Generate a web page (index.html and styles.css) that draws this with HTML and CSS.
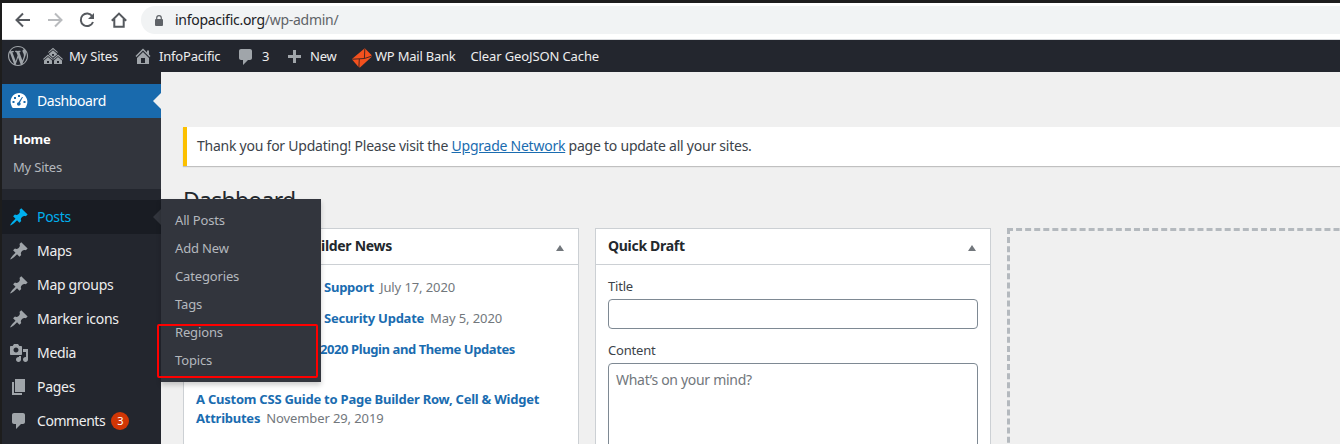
FILE: index.html
```html
<!DOCTYPE html>
<html lang="en">
<head>
<meta charset="utf-8">
<title>Dashboard</title>
<link rel="stylesheet" href="styles.css">
</head>
<body>
<svg width="0" height="0" class="defs">
  <symbol id="pin" viewBox="0 0 20 20"><path d="M10.44 3.02l1.82-1.82 6.36 6.35-1.83 1.82c-1.05-.68-2.48-.57-3.41.36l-.75.75c-.92.93-1.04 2.35-.35 3.41l-1.83 1.82-2.41-2.41-2.8 2.79c-.42.42-3.38 2.71-3.8 2.29s1.86-3.39 2.28-3.81l2.79-2.79L4.1 9.36l1.83-1.82c1.05.69 2.48.57 3.4-.36l.75-.75c.93-.92 1.05-2.35.36-3.41z"/></symbol>
  <symbol id="comment" viewBox="0 0 20 20"><path d="M5 2h9c1.1 0 2 .9 2 2v7c0 1.1-.9 2-2 2h-2l-5 5v-5H5c-1.1 0-2-.9-2-2V4c0-1.1.9-2 2-2z"/></symbol>
</svg>
<header class="browser">
  <svg class="nav" viewBox="0 0 16 16"><path d="M15 8H2M8 1.5L1.5 8L8 14.5"/></svg>
  <svg class="nav off" viewBox="0 0 16 16"><path d="M1 8h13M8 1.5L14.500 8L8 14.500"/></svg>
  <svg class="nav" viewBox="0 0 16 16"><path d="M13.300 4.200A6.300 6.300 0 1 0 14 10"/><path class="solid" d="M15 1v6H9z"/></svg>
  <svg class="nav" viewBox="0 0 16 16"><path d="M.8 8.800L8 1.600l7.200 7.200M3.300 7v7.800h9.400V7"/></svg>
  <div class="url">
    <svg class="lock" viewBox="0 0 8 11"><rect y="4" width="8" height="7" rx="1"/><path d="M1.700 5V3a2.300 2.300 0 0 1 4.600 0v2" fill="none" stroke="#5f6368" stroke-width="1.200"/></svg>
    <span class="host">infopacific.org</span><span class="path">/wp-admin/</span>
  </div>
</header>
<nav class="adminbar">
  <svg class="ico wp" viewBox="0 0 20 20"><path d="M20 10c0-5.510-4.490-10-10-10C4.480 0 0 4.490 0 10c0 5.520 4.480 10 10 10 5.510 0 10-4.480 10-10zM7.780 15.370L4.370 6.220c.55-.02 1.170-.08 1.170-.08.5-.06.44-1.130-.06-1.110 0 0-1.450.11-2.370.11-.18 0-.37 0-.58-.01C4.120 2.690 6.870 1.110 10 1.110c2.330 0 4.450.87 6.050 2.340-.68-.11-1.650.39-1.650 1.580 0 .74.45 1.360.9 2.100.35.61.55 1.360.55 2.460 0 1.490-1.400 5-1.400 5l-3.030-8.370c.54-.02.82-.17.82-.17.5-.05.44-1.250-.06-1.220 0 0-1.440.12-2.380.12-.87 0-2.330-.12-2.330-.12-.5-.03-.56 1.200-.06 1.220l.92.08 1.260 3.410zM17.410 10c.24-.64.74-1.870.43-4.250.7 1.290 1.050 2.710 1.050 4.250 0 3.290-1.730 6.240-4.400 7.780.97-2.590 1.940-5.200 2.920-7.780zM6.100 18.090C3.120 16.650 1.110 13.530 1.110 10c0-1.300.23-2.480.72-3.590C3.250 10.300 4.670 14.200 6.100 18.090zm4.030-6.630l2.580 6.980c-.86.29-1.760.45-2.710.45-.79 0-1.570-.11-2.290-.33.81-2.380 1.620-4.740 2.420-7.100z"/></svg>
  <a class="ab sites"><svg class="ico" viewBox="0 0 20 20"><path d="M14.270 6.870L10 3.140 5.730 6.870 5 6.140l5-4.380 5 4.380zM14 8.420l-4.050 3.430L6 8.380v-.74l4-3.500 4 3.500v.78zM11 9.700V8H9v1.700h2zm-1.730 4.030L5 10 .73 13.730 0 13l5-4.380L10 13zm10 0L15 10l-4.270 3.730L10 13l5-4.380L20 13zM5 11l4 3.500V18H1v-3.500zm10 0l4 3.500V18h-8v-3.500zm-9 6v-2H4v2h2zm10 0v-2h-2v2h2z"/></svg><span>My Sites</span></a>
  <a class="ab site"><svg class="ico" viewBox="0 0 20 20"><path d="M16 8.500l1.530 1.530-1.060 1.060L10 4.600l-6.470 6.490-1.060-1.060L10 2.500l4 4v-2h2v4zm-6-2.460l6 5.990V18H4v-5.970zM12 17v-5H8v5h4z"/></svg><span>InfoPacific</span></a>
  <a class="ab count"><svg class="ico"><use href="#comment"/></svg><span>3</span></a>
  <a class="ab new"><svg class="ico" viewBox="0 0 20 20"><path d="M17 7v3h-5v5H9v-5H4V7h5V2h3v5h5z"/></svg><span>New</span></a>
  <a class="ab mail"><svg class="ico" viewBox="0 0 20 20"><path fill="#f4511e" d="M13 .5L19.500 7v2L8 19.500 6.500 19 .5 12v-1.500L12.500.5z"/><path fill="none" stroke="#3a2220" stroke-width=".9" d="M12.800.8l-.4 9.700L19.500 8.200M.8 11.200l11.600-.7M7.300 11l-.4 8"/></svg><span>WP Mail Bank</span></a>
  <a class="ab cache"><span>Clear GeoJSON Cache</span></a>
</nav>
<div class="shell">
  <aside class="side">
    <a class="item current"><svg class="mi" viewBox="0 0 20 20"><path fill-rule="evenodd" d="M3.760 17h12.480c1.340-1.710 2.150-3.880 2.150-6.250C18.390 6 14.640 2 10 2S1.610 6 1.610 10.750c0 2.370.81 4.540 2.150 6.250zM9 4h2v2H9zM5 6h2v2H5zM13 6h1l-3 5.500c.8.700 1 2 0 2.800-1.200.9-3 .3-3-1.300 0-1 .7-1.700 1.500-1.800zM3.500 10h2v2h-2zM14.500 10h2v2h-2z"/></svg><span>Dashboard</span></a>
    <div class="sub"><b>Home</b><span>My Sites</span></div>
    <a class="item posts"><svg class="mi"><use href="#pin"/></svg><span>Posts</span></a>
    <a class="item"><svg class="mi"><use href="#pin"/></svg><span>Maps</span></a>
    <a class="item"><svg class="mi"><use href="#pin"/></svg><span>Map groups</span></a>
    <a class="item"><svg class="mi"><use href="#pin"/></svg><span>Marker icons</span></a>
    <a class="item"><svg class="mi" viewBox="0 0 20 20"><path d="M13 11V4c0-.55-.45-1-1-1h-1.670L9 1H5L3.670 3H2c-.55 0-1 .45-1 1v7c0 .55.45 1 1 1h10c.55 0 1-.45 1-1zM7 4.500c1.380 0 2.500 1.120 2.500 2.500S8.380 9.500 7 9.500 4.500 8.380 4.500 7 5.620 4.500 7 4.500zM14 6h5v10.500c0 1.380-1.120 2.500-2.500 2.500S14 17.880 14 16.500s1.120-2.500 2.500-2.500c.17 0 .34.02.5.05V9h-3V6zm-4 8.050V13h2v3.500c0 1.380-1.120 2.500-2.500 2.500S7 17.880 7 16.500 8.120 14 9.500 14c.17 0 .34.02.5.05z"/></svg><span>Media</span></a>
    <a class="item"><svg class="mi" viewBox="0 0 20 20"><path d="M6 15V2h10v13H6zm-1 1h8v2H3V5h2v11z"/></svg><span>Pages</span></a>
    <a class="item comments"><svg class="mi"><use href="#comment"/></svg><span>Comments</span><em class="badge">3</em></a>
    <div class="flyout">
      <a>All Posts</a><a>Add New</a><a>Categories</a><a>Tags</a><a>Regions</a><a>Topics</a>
      <i class="mark"></i>
    </div>
  </aside>
  <main class="main">
    <div class="notice"><p>Thank you for Updating! Please visit the <u>Upgrade Network</u> page to update all your sites.</p></div>
    <h1>Dashboard</h1>
    <div class="cols">
      <section class="box news">
        <h2><span>ilder News</span><i class="tri"></i></h2>
        <div class="feed">
          <p class="r"><b>Support</b><time>July 17, 2020</time></p>
          <p class="r"><b>Security Update</b><time>May 5, 2020</time></p>
          <p class="r plugins"><b>2020 Plugin and Theme Updates</b></p>
          <p class="guide"><b>A Custom CSS Guide to Page Builder Row, Cell &amp; Widget</b><br><b>Attributes</b><time>November 29, 2019</time></p>
        </div>
      </section>
      <section class="box draft">
        <h2><span>Quick Draft</span><i class="tri"></i></h2>
        <div class="form">
          <label>Title</label><div class="field"></div>
          <label>Content</label><div class="field area">What’s on your mind?</div>
        </div>
      </section>
      <div class="empty"></div>
    </div>
  </main>
</div>
</body>
</html>
```
FILE: styles.css
```css
* { box-sizing: border-box; }
body { margin: 0; width: 1340px; height: 444px; overflow: hidden; background: #1d1d1d; padding: 3px 0 0 2px; font: 13px/20px "Noto Sans", sans-serif; color: #3c434a; letter-spacing: -.2px; }
.defs { position: absolute; }
span, b, time, a { white-space: nowrap; }
.browser { height: 37px; background: #fff; border-bottom: 1px solid #d8dadd; display: flex; align-items: center; padding: 0 0 2px 13px; gap: 16px; }
.nav { width: 16px; height: 16px; fill: none; stroke: #55595e; stroke-width: 2; flex: none; }
.nav .solid { fill: #55595e; stroke: none; }
.nav.off { stroke: #b9bbbe; }
.url { flex: 1; margin-left: -2px; height: 28px; background: #f1f3f4; border-radius: 14px 0 0 14px; display: flex; align-items: center; padding-left: 14px; font-size: 14px; letter-spacing: -.28px; }
.lock { width: 8px; height: 11px; fill: #5f6368; margin-right: 12px; }
.host { color: #202124; }
.path { color: #5f6368; }
.adminbar { height: 32px; background: #23262e; display: flex; align-items: center; color: #eee; fill: #a0a5aa; padding-left: 6px; }
.ab { display: flex; align-items: center; }
.ico { width: 20px; height: 20px; flex: none; }
.sites { margin-left: 15px; width: 90px; gap: 6px; }
.site { width: 103px; gap: 6px; }
.count { width: 48px; gap: 6px; }
.count .ico { margin-top: 2px; }
.new { width: 68px; gap: 6px; }
.new .ico { margin-top: 3px; }
.mail { width: 118.500px; gap: 3px; letter-spacing: -.22px; }
.mail .ico { margin-top: 3px; }
.cache { letter-spacing: -.12px; }
.shell { display: flex; height: 372px; }
.side { width: 159px; flex: none; background: #23262e; padding-top: 12px; position: relative; fill: #a0a5aa; }
.item { display: flex; align-items: center; height: 34px; padding-left: 7px; gap: 8px; color: #eee; font-size: 14px; letter-spacing: -.3px; position: relative; }
.mi { width: 20px; height: 20px; flex: none; }
.current { background: #196aad; color: #fff; fill: #fff; letter-spacing: -.4px; }
.comments { letter-spacing: -.45px; }
.current::after, .posts::after { content: ""; position: absolute; right: 0; top: 9px; border: 8px solid transparent; border-left: 0; border-right-color: #f0f0f0; }
.posts::after { border-right-color: #32353d; }
.posts { background: #191c23; color: #00b0ee; fill: #00b0ee; }
.sub { height: 71px; background: #32353d; margin-bottom: 11px; display: flex; flex-direction: column; padding: 7px 11px; line-height: 28px; color: #b4b8bd; }
.sub b { color: #fff; letter-spacing: -.25px; }
.badge { font-style: normal; background: #d13605; color: #fff; font-size: 11px; width: 18px; height: 18px; line-height: 18px; text-align: center; border-radius: 50%; margin-left: -2px; }
.flyout { position: absolute; left: 159px; top: 127px; width: 160px; height: 183px; background: #32353d; color: #b4b8bd; padding: 7px 14px; display: flex; flex-direction: column; line-height: 28px; box-shadow: 0 3px 5px rgba(0,0,0,.2); z-index: 2; letter-spacing: -.15px; }
.mark { position: absolute; left: -4px; top: 125px; width: 161px; height: 54px; border: 2px solid #f00; border-radius: 2px; }
.main { flex: 1; min-width: 0; background: #f0f0f0; padding: 55px 0 0 22px; }
.notice { height: 39px; background: #fff; border-left: 4px solid #fcc000; box-shadow: 0 1px 1px rgba(0,0,0,.2); padding: 9px 10px; font-size: 14px; letter-spacing: -.24px; }
p { margin: 0; white-space: nowrap; }
u { color: #1a6cb0; }
h1 { margin: 17px 0 0; height: 45px; font-size: 23px; font-weight: 400; line-height: 34px; color: #23282d; letter-spacing: -.75px; }
.cols { display: flex; height: 216px; overflow: hidden; }
.box { width: 396px; height: 260px; flex: none; background: #fff; border: 1px solid #ccd0d4; margin-right: 16px; }
h2 { margin: 0; height: 36px; border-bottom: 1px solid #ccd0d4; display: flex; justify-content: space-between; align-items: center; padding: 0 14px 2px 12px; font-size: 14px; color: #23282d; letter-spacing: -.3px; }
.news h2 { padding-left: 137px; }
.tri { border: 4.500px solid transparent; border-top: 0; border-bottom: 6px solid #72777c; margin-top: 4px; }
.feed { padding: 12px; line-height: 19px; }
.feed b { color: #1a6cb0; letter-spacing: -.24px; }
.feed time { color: #72777c; margin-left: 6px; letter-spacing: -.1px; }
.r { height: 31px; line-height: 21px; display: flex; padding-left: 128px; }
.plugins { padding-left: 124px; }
.feed .plugins b { letter-spacing: -.41px; }
.guide { margin-top: 20px; }
.form { padding: 11px 12px; }
label { display: block; line-height: 20px; margin-bottom: 3px; }
.field { height: 30px; border: 1px solid #7e8993; border-radius: 4px; margin-bottom: 11px; background: #fff; }
.area { height: 120px; padding: 6px 7px; font-size: 14px; color: #72777c; letter-spacing: -.3px; }
.empty { width: 396px; height: 260px; border: 3px dashed #b4b9be; flex: none; }
```
